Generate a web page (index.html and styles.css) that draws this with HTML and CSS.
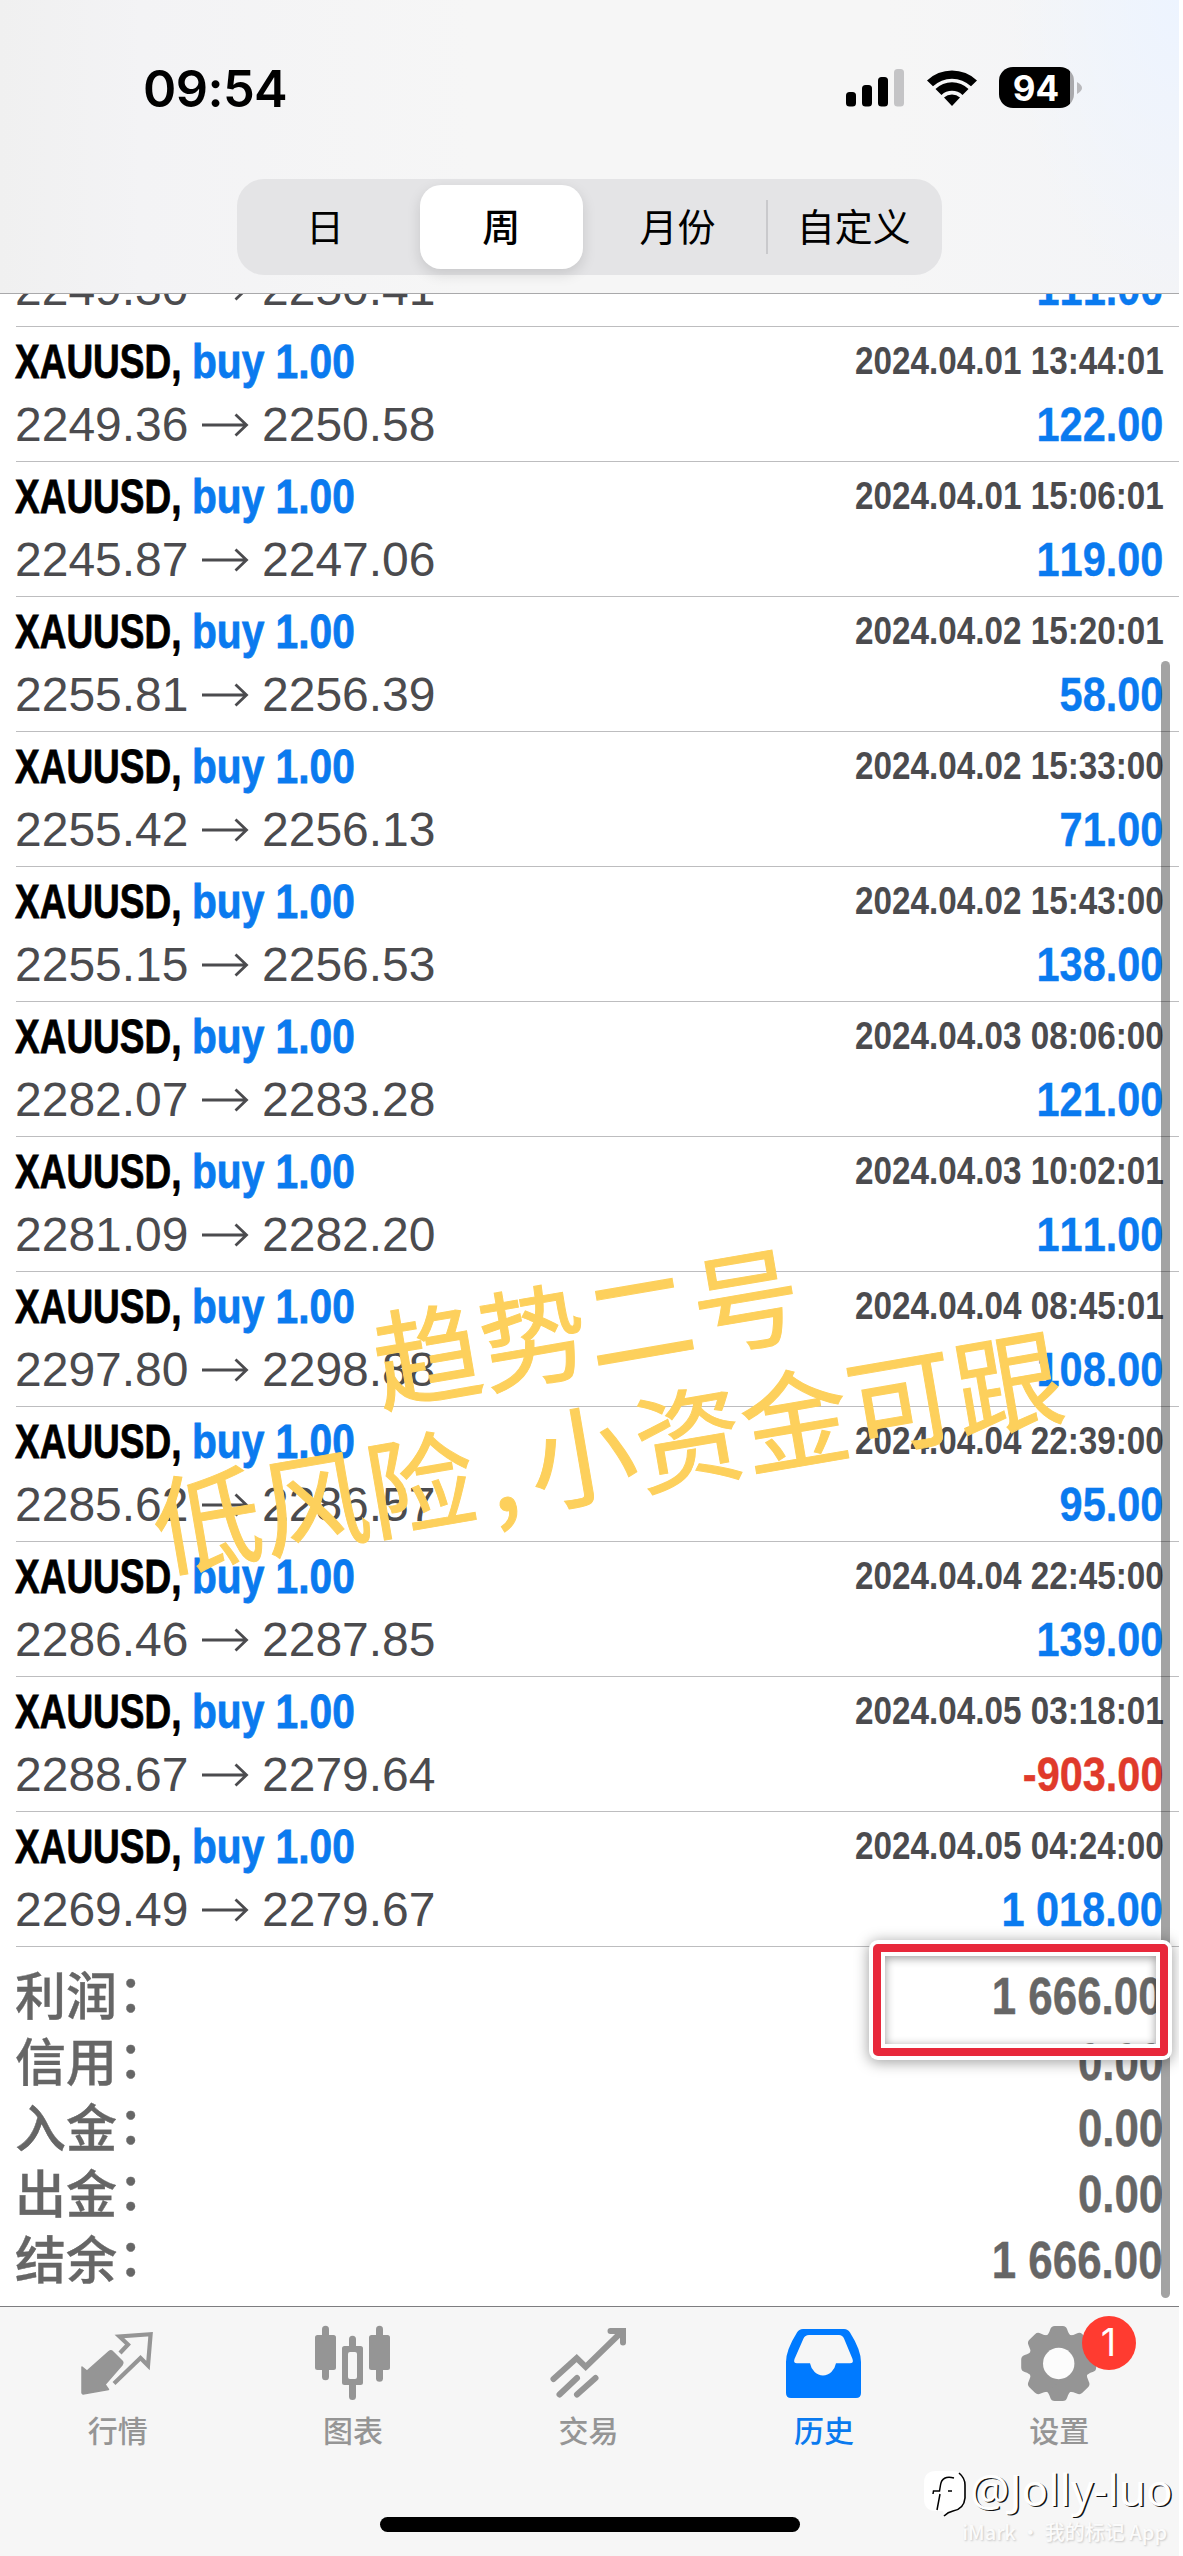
FILE: index.html
```html
<!DOCTYPE html>
<html lang="zh-CN">
<head>
<meta charset="utf-8">
<title>历史</title>
<link rel="stylesheet" href="styles.css">
</head>
<body>
<svg width="0" height="0" class="defs">
  <symbol id="arrow" viewBox="0 0 48 26"><path d="M1 13H45M34.5 2.5L45.5 13L34.5 23.5" fill="none" stroke="#4b4b4e" stroke-width="2.8"/></symbol>
</svg>
<div class="screen">
  <header class="header">
    <div class="status">
      <span class="clock">09:54</span>
      <div class="indicators">
        <svg class="signal" width="59" height="38" viewBox="0 0 59 38">
          <rect x="0" y="23" width="10" height="14.5" rx="3.5"/><rect x="16" y="16" width="10" height="21.5" rx="3.5"/><rect x="32" y="8" width="10" height="29.5" rx="3.5"/><rect x="48" y="0" width="10" height="37.5" rx="3.5" fill="#c4c4c6"/>
        </svg>
        <svg class="wifi" width="52" height="38" viewBox="0 0 52 38">
          <path d="M1 11.5A36 36 0 0 1 51 11.5L45 17.3A27.5 27.5 0 0 0 7 17.3Z"/>
          <path d="M9.5 20A23.500 23.500 0 0 1 42.500 20L36.500 26A15.200 15.200 0 0 0 15.500 26Z"/>
          <path d="M18 28.500A12 12 0 0 1 34 28.500L26 37Z"/>
        </svg>
        <div class="battery"><span class="level">94</span></div>
        <svg class="nub" width="5" height="14" viewBox="0 0 5 14"><path d="M0 1Q5 4 5 7Q5 10 0 13Z" fill="#b9b9bc"/></svg>
      </div>
    </div>
    <nav class="segments">
      <span class="segment">日</span>
      <span class="segment selected">周</span>
      <span class="segment">月份</span>
      <span class="segment divided">自定义</span>
    </nav>
  </header>

  <main class="history">
    <div class="deal partial"><div class="line"><span class="price">2249.30</span><svg class="to"><use href="#arrow"/></svg><span class="price">2250.41</span><span class="profit">111.00</span></div></div>
    <div class="deal"><div class="line"><span class="symbol">XAUUSD,</span><span class="side">buy 1.00</span><time>2024.04.01 13:44:01</time></div><div class="line"><span class="price">2249.36</span><svg class="to"><use href="#arrow"/></svg><span class="price">2250.58</span><span class="profit">122.00</span></div></div>
    <div class="deal"><div class="line"><span class="symbol">XAUUSD,</span><span class="side">buy 1.00</span><time>2024.04.01 15:06:01</time></div><div class="line"><span class="price">2245.87</span><svg class="to"><use href="#arrow"/></svg><span class="price">2247.06</span><span class="profit">119.00</span></div></div>
    <div class="deal"><div class="line"><span class="symbol">XAUUSD,</span><span class="side">buy 1.00</span><time>2024.04.02 15:20:01</time></div><div class="line"><span class="price">2255.81</span><svg class="to"><use href="#arrow"/></svg><span class="price">2256.39</span><span class="profit">58.00</span></div></div>
    <div class="deal"><div class="line"><span class="symbol">XAUUSD,</span><span class="side">buy 1.00</span><time>2024.04.02 15:33:00</time></div><div class="line"><span class="price">2255.42</span><svg class="to"><use href="#arrow"/></svg><span class="price">2256.13</span><span class="profit">71.00</span></div></div>
    <div class="deal"><div class="line"><span class="symbol">XAUUSD,</span><span class="side">buy 1.00</span><time>2024.04.02 15:43:00</time></div><div class="line"><span class="price">2255.15</span><svg class="to"><use href="#arrow"/></svg><span class="price">2256.53</span><span class="profit">138.00</span></div></div>
    <div class="deal"><div class="line"><span class="symbol">XAUUSD,</span><span class="side">buy 1.00</span><time>2024.04.03 08:06:00</time></div><div class="line"><span class="price">2282.07</span><svg class="to"><use href="#arrow"/></svg><span class="price">2283.28</span><span class="profit">121.00</span></div></div>
    <div class="deal"><div class="line"><span class="symbol">XAUUSD,</span><span class="side">buy 1.00</span><time>2024.04.03 10:02:01</time></div><div class="line"><span class="price">2281.09</span><svg class="to"><use href="#arrow"/></svg><span class="price">2282.20</span><span class="profit">111.00</span></div></div>
    <div class="deal"><div class="line"><span class="symbol">XAUUSD,</span><span class="side">buy 1.00</span><time>2024.04.04 08:45:01</time></div><div class="line"><span class="price">2297.80</span><svg class="to"><use href="#arrow"/></svg><span class="price">2298.88</span><span class="profit">108.00</span></div></div>
    <div class="deal"><div class="line"><span class="symbol">XAUUSD,</span><span class="side">buy 1.00</span><time>2024.04.04 22:39:00</time></div><div class="line"><span class="price">2285.62</span><svg class="to"><use href="#arrow"/></svg><span class="price">2286.57</span><span class="profit">95.00</span></div></div>
    <div class="deal"><div class="line"><span class="symbol">XAUUSD,</span><span class="side">buy 1.00</span><time>2024.04.04 22:45:00</time></div><div class="line"><span class="price">2286.46</span><svg class="to"><use href="#arrow"/></svg><span class="price">2287.85</span><span class="profit">139.00</span></div></div>
    <div class="deal"><div class="line"><span class="symbol">XAUUSD,</span><span class="side">buy 1.00</span><time>2024.04.05 03:18:01</time></div><div class="line"><span class="price">2288.67</span><svg class="to"><use href="#arrow"/></svg><span class="price">2279.64</span><span class="profit loss">-903.00</span></div></div>
    <div class="deal"><div class="line"><span class="symbol">XAUUSD,</span><span class="side">buy 1.00</span><time>2024.04.05 04:24:00</time></div><div class="line"><span class="price">2269.49</span><svg class="to"><use href="#arrow"/></svg><span class="price">2279.67</span><span class="profit">1 018.00</span></div></div>
    <section class="summary">
      <div class="total"><span class="label">利润<i>：</i></span><span class="amount">1 666.00</span></div>
      <div class="total"><span class="label">信用<i>：</i></span><span class="amount">0.00</span></div>
      <div class="total"><span class="label">入金<i>：</i></span><span class="amount">0.00</span></div>
      <div class="total"><span class="label">出金<i>：</i></span><span class="amount">0.00</span></div>
      <div class="total"><span class="label">结余<i>：</i></span><span class="amount">1 666.00</span></div>
    </section>
  </main>

  <footer class="tabbar">
    <nav class="tabs">
      <div class="tab">
        <svg width="80" height="80" viewBox="0 0 80 80">
          <path d="M4 43L9 47L31 27.500Q33 26 35 28L44.500 37.500Q45.500 39 44 41L27 60.500L30.500 65.500L5 70L4 69Z" fill="#959595" stroke="#959595" stroke-width="1.500" stroke-linejoin="round"/>
          <path d="M42 29L50 20.500L41.500 12.500L72.600 10.200L70 41.500L62.500 34L36 59.500" fill="none" stroke="#959595" stroke-width="4.200"/>
        </svg>
        <span>行情</span>
      </div>
      <div class="tab">
        <svg width="80" height="80" viewBox="0 0 80 80" fill="#959595">
          <rect x="2" y="11" width="21" height="35" rx="2.500"/><rect x="9" y="1.700" width="7" height="54.500" rx="3.500"/>
          <path fill-rule="evenodd" d="M31.500 22H47.500Q50 22 50 24.500V58.500Q50 61 47.500 61H31.500Q29 61 29 58.500V24.500Q29 22 31.500 22ZM37 28Q35 28 35 30V53Q35 55 37 55H42Q44 55 44 53V30Q44 28 42 28Z"/>
          <path d="M36 23V15.200A3.500 3.500 0 0 1 43 15.200V23ZM36 60V72.500A3.500 3.500 0 0 0 43 72.500V60Z"/>
          <rect x="56" y="11" width="21" height="35" rx="2.500"/><rect x="63" y="1.700" width="7" height="56" rx="3.500"/>
        </svg>
        <span>图表</span>
      </div>
      <div class="tab">
        <svg width="80" height="80" viewBox="0 0 80 80" fill="none" stroke="#959595" stroke-width="6" stroke-linecap="round">
          <path d="M5.500 55L28.700 34L37.700 42.800L73 8.500M62.500 7H75V18.500M11.500 70.500L29 54M29 70.500L47.500 54"/>
        </svg>
        <span>交易</span>
      </div>
      <div class="tab active">
        <svg width="80" height="80" viewBox="0 0 80 80" fill="#007aff">
          <path fill-rule="evenodd" d="M19 5H60Q64 5 66 8.500Q77 26 77 38V69Q77 74 72 74H7Q2 74 2 69V38Q2 26 13 8.500Q15 5 19 5ZM25 11Q21 11 19.500 14.500L10.500 35Q9 39.300 13 39.300H26A13.300 15.500 0 0 0 52 39.300H66Q70 39.300 68.500 35L60 14.500Q58.500 11 55 11Z"/>
        </svg>
        <span>历史</span>
      </div>
      <div class="tab">
        <svg width="80" height="80" viewBox="0 0 80 80">
          <g transform="translate(39.700 39.500)" fill="#959595">
            <circle r="30.500"/>
            <path id="tooth" d="M-13 -27Q-10 -29 -8.500 -34Q-7.500 -37.500 -4 -37.500H4Q7.500 -37.500 8.500 -34Q10 -29 13 -27V27Q10 29 8.500 34Q7.500 37.500 4 37.500H-4Q-7.500 37.500 -8.500 34Q-10 29 -13 27Z"/>
            <use href="#tooth" transform="rotate(45)"/><use href="#tooth" transform="rotate(90)"/><use href="#tooth" transform="rotate(135)"/>
            <circle r="15.700" fill="#fcfcfc"/>
          </g>
        </svg>
        <span>设置</span>
        <b class="badge">1</b>
      </div>
    </nav>
    <div class="home"></div>
  </footer>

  <div class="scrollbar"></div>
  <div class="callout"><div class="callout-inner"></div></div>
  <div class="caption">趋势二号<br>低风险<span class="comma">,</span>小资金可跟</div>
  <div class="signature">
    <svg width="44" height="48" viewBox="0 0 44 48">
      <path d="M13 1H29Q41 1 41 13V28Q41 40 29 41Q25 42 21 46L20 41H13Q1 41 1 29V13Q1 1 13 1Z" fill="#fff"/>
      <path d="M36 3Q42 8 42 15V28Q41 39 30 41Q25 42 21 46" fill="none" stroke="#000" stroke-width="1.600"/>
      <path d="M31 8Q19 5 17.500 15L16.500 21H10.500L10 24M17 24L14 40M25 21H29" fill="none" stroke="#000" stroke-width="1.500"/>
    </svg>
    <span class="handle">@Jolly-luo</span>
  </div>
  <div class="appmark">iMark · 我的标记 App</div>
</div>
</body>
</html>
```
FILE: styles.css
```css
* { box-sizing: border-box; }

body {
  margin: 0;
  background: #fff;
  font-family: "Liberation Sans", "Noto Sans CJK SC", sans-serif;
  font-kerning: none;
}

.defs { position: absolute; }

.screen {
  position: relative;
  display: flex;
  flex-direction: column;
  width: 1179px;
  height: 2556px;
  overflow: hidden;
}

/* header */
.header {
  position: relative;
  z-index: 1;
  flex: none;
  height: 294px;
  border-bottom: 1px solid #a9a9ab;
  background:
    radial-gradient(ellipse 170px 300px at 100% 0, #edf4ff, rgba(240, 245, 255, 0)),
    linear-gradient(90deg, #f0f0f0, #f3f3f5 12%, #f6f6f6 40%, #f6f6f6 75%, #f3f4f7);
}

.status {
  display: flex;
  justify-content: space-between;
  height: 179px;
  padding: 57px 97px 0 143px;
}

.clock {
  font: 600 50.500px/64px Inter, sans-serif;
  letter-spacing: -0.6px;
}

.indicators {
  display: flex;
  align-items: flex-start;
  padding-top: 10px;
}

.signal { margin: 2px 21px 0 0; }
.wifi { margin: 2px 21px 0 0; }

.battery {
  width: 75px;
  height: 41px;
  border-radius: 14px;
  background: linear-gradient(90deg, #000 71px, #a9a9ac 71px);
}

.level {
  display: block;
  width: 74px;
  color: #fff;
  font: 700 35px/42px Inter, sans-serif;
  text-align: center;
}

.nub { margin: 14px 0 0 3px; }

.segments {
  display: grid;
  grid-template-columns: repeat(4, 1fr);
  width: 705px;
  height: 96px;
  margin-left: 237px;
  border-radius: 27px;
  background: #e4e4e6;
}

.segment {
  display: flex;
  align-items: center;
  justify-content: center;
  padding-bottom: 5px;
  font-family: "Noto Sans CJK SC", sans-serif;
  font-size: 38px;
  white-space: nowrap;
}

.segment.selected {
  margin: 6px 7px;
  border-radius: 21px;
  background: #fff;
  box-shadow: 0 5px 14px rgba(0, 0, 0, 0.13);
  font-weight: 500;
}

.segment.divided {
  background: linear-gradient(#c9c9cc, #c9c9cc) 0 21px / 2px 54px no-repeat;
}

/* deals */
.history {
  flex: none;
  height: 2049px;
  margin-top: -37px;
  padding-left: 16px;
}

.deal {
  height: 135px;
  padding: 3px 15px 0 0;
  border-bottom: 1px solid #bdbdbf;
}

.deal.partial {
  height: 70px;
  padding-top: 0;
}

.line {
  display: flex;
  height: 63px;
  line-height: 63px;
  white-space: nowrap;
}

.symbol, .side {
  font-size: 49px;
  font-weight: 700;
  transform-origin: 0 50%;
  -webkit-text-stroke: 0.8px;
}

.symbol {
  width: 177px;
  margin-left: -1px;
  transform: scaleX(0.755);
}

.side {
  width: 170px;
  color: #0a7aef;
  transform: scaleX(0.83);
}

time, .profit {
  margin-left: auto;
  font-weight: 700;
  transform-origin: 100% 50%;
}

time {
  color: #4b4b4e;
  font-size: 39.5px;
  line-height: 61px;
  transform: scaleX(0.842);
}

.price {
  width: 174px;
  margin-left: -1px;
  color: #4b4b4e;
  font-size: 48px;
}

.to {
  width: 48px;
  height: 26px;
  margin: 19px 14px 0 12px;
}

.profit {
  color: #0a7aef;
  font-size: 48.5px;
  transform: translateX(-1px) scaleX(0.855);
  -webkit-text-stroke: 0.4px;
}

.profit.loss { color: #e03a2b; }

/* totals */
.summary { padding: 17px 15px 0 0; }

.total {
  display: flex;
  justify-content: space-between;
  height: 66px;
  color: #666;
  line-height: 66px;
}

.label {
  margin-left: -1px;
  font: 500 51px/58px "Noto Sans CJK SC", sans-serif;
  -webkit-text-stroke: 0.4px;
}

.label i {
  display: inline-block;
  font-style: normal;
  transform: translate(1px, -3px);
}

.amount {
  font-size: 51px;
  font-weight: 700;
  transform: translateX(-1px) scaleX(0.86);
  transform-origin: 100% 50%;
  -webkit-text-stroke: 0.4px;
}

/* tab bar */
.tabbar {
  display: flex;
  flex: none;
  flex-direction: column;
  align-items: center;
  height: 250px;
  border-top: 1px solid #7d7d80;
  background: #f6f6f6;
}

.tabs {
  display: grid;
  grid-template-columns: repeat(5, 1fr);
  width: 1177px;
  margin-left: -2px;
  height: 210px;
}

.tab {
  position: relative;
  display: flex;
  flex-direction: column;
  align-items: center;
  padding-top: 17px;
  color: #959595;
  font: 500 30px/44px "Noto Sans CJK SC", sans-serif;
}

.tab span { margin-top: 3px; }
.tab.active { color: #0a7aef; }

.badge {
  position: absolute;
  top: 9px;
  left: 140px;
  width: 54px;
  height: 54px;
  border-radius: 50%;
  background: #ff3b30;
  color: #fff;
  font: 400 38px/53px Inter, sans-serif;
  text-align: center;
}

.home {
  width: 420px;
  height: 15px;
  border-radius: 8px;
  background: #000;
}

/* overlays */
.scrollbar {
  position: absolute;
  top: 661px;
  left: 1161px;
  width: 9px;
  height: 1637px;
  border-radius: 5px;
  background: rgba(0, 0, 0, 0.36);
}

.callout {
  position: absolute;
  top: 1944px;
  left: 873px;
  width: 295px;
  height: 112px;
  border: 8px solid #e8283b;
  border-radius: 5px;
  box-shadow: 0 0 0 4px #fff, 0 2px 14px 5px rgba(0, 0, 0, 0.35);
}

.callout-inner {
  height: 100%;
  border: 4px solid #fff;
  box-shadow: inset 0 2px 10px rgba(0, 0, 0, 0.4);
}

.caption {
  position: absolute;
  top: 1258px;
  left: 136px;
  width: 920px;
  color: #fdd05c;
  font: 400 108px/126px "Noto Sans CJK SC", sans-serif;
  text-align: center;
  white-space: nowrap;
  transform: rotate(-9.7deg);
  -webkit-text-stroke: 1px;
}

.comma {
  display: inline-block;
  width: 56px;
}

.signature {
  position: absolute;
  top: 2470px;
  left: 923px;
  display: flex;
  gap: 3px;
}

.handle {
  margin-top: -4px;
  color: #fff;
  font: 400 44px/46px "Noto Sans", sans-serif;
  text-shadow: 1.500px 1px 0 #111;
  white-space: nowrap;
}

.appmark {
  position: absolute;
  top: 2516px;
  right: 12px;
  color: #fbfbfb;
  font: 500 20px/32px "Noto Sans CJK SC", sans-serif;
  text-shadow: 1px 1px 2px #c8c8c8;
  white-space: nowrap;
}
```
